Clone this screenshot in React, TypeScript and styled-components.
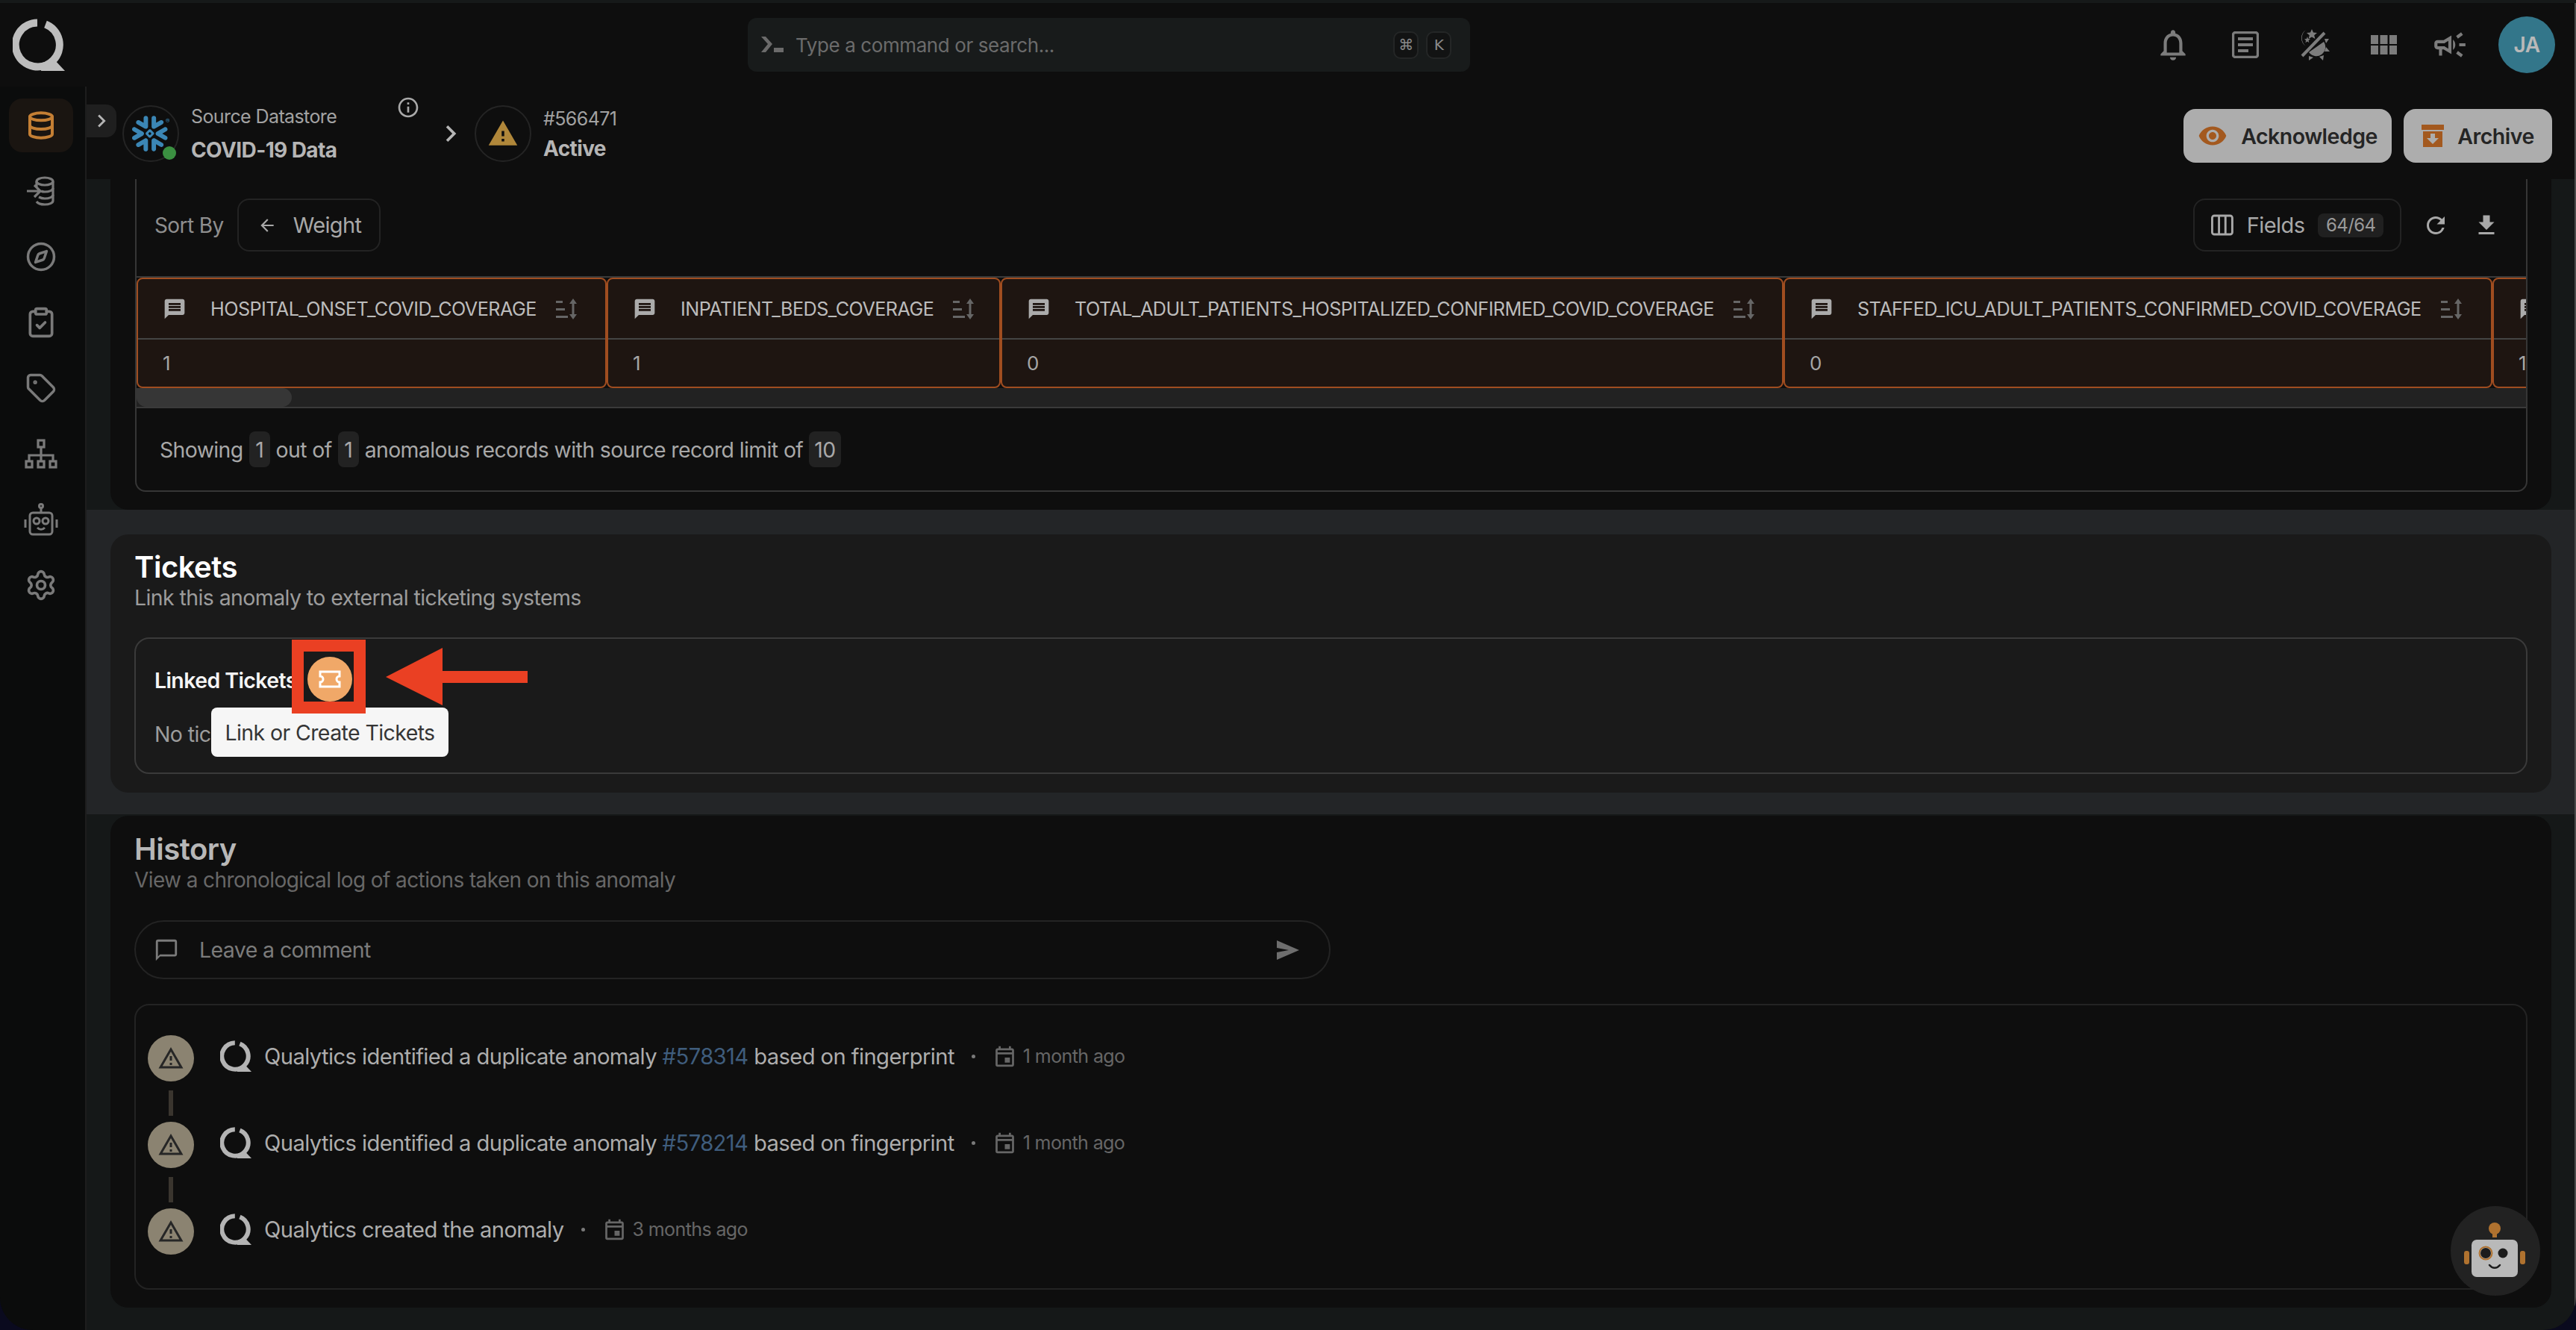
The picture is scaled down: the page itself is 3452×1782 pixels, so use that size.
import React from "react";
import styled, { createGlobalStyle } from "styled-components";
import {
  MdOutlineNotifications,
  MdOutlineCampaign,
  MdRemoveRedEye,
  MdRefresh,
  MdFileDownload,
  MdOutlineChatBubbleOutline,
  MdMessage,
  MdOutlineEvent,
  MdWarning,
  MdOutlineWarningAmber,
  MdChevronRight,
  MdArrowBack,
  MdInfoOutline,
} from "react-icons/md";
import { Compass, ClipboardCheck, Tag, Settings, Database } from "lucide-react";
import { SiSnowflake } from "react-icons/si";

const GlobalStyle = createGlobalStyle`
  html, body {
    margin: 0;
    padding: 0;
    background: #0a0a1e;
  }
  * {
    box-sizing: border-box;
  }
`;

const Frame = styled.div`
  width: 3452px;
  height: 1782px;
  position: relative;
  display: flex;
  flex-direction: column;
  overflow: hidden;
  background: #0e0e0e;
  border-top: 4px solid #161919;
  border-bottom-right-radius: 44px;
  border-bottom-left-radius: 44px;
  font-family: Inter, "Liberation Sans", sans-serif;
  letter-spacing: -0.6px;
`;

const Header = styled.header`
  height: 112px;
  flex: none;
  display: flex;
  align-items: center;
  padding-left: 17px;
  padding-right: 28px;
`;

const LogoSlot = styled.span`
  display: flex;
  color: #bdbdbd;
`;

const CommandBar = styled.div`
  width: 968px;
  height: 72px;
  margin-left: 915px;
  align-self: flex-start;
  margin-top: 20px;
  display: flex;
  align-items: center;
  padding: 0 25px 0 18px;
  background: #181b1b;
  border-radius: 12px;
`;

const CommandText = styled.span`
  flex: 1;
  margin-left: 16px;
  font-size: 26px;
  color: #6b6b6b;
  letter-spacing: -0.4px;
`;

const Key = styled.span`
  width: 34px;
  height: 37px;
  margin-left: 10px;
  display: flex;
  align-items: center;
  justify-content: center;
  border: 2px solid #242626;
  border-radius: 10px;
  background: #121313;
  font-size: 20px;
  color: #8a8a8a;
  font-family: "DejaVu Sans", sans-serif;
`;

const TopIcons = styled.div`
  margin-left: auto;
  display: flex;
  align-items: center;
`;

const TopIcon = styled.span<{ $gap: number }>`
  display: flex;
  margin-left: ${(p) => p.$gap}px;
  color: #7c7c7c;
`;

const Avatar = styled.div`
  width: 76px;
  height: 76px;
  margin-left: 40px;
  border-radius: 50%;
  background: #33768a;
  color: #b9b9b9;
  display: flex;
  align-items: center;
  justify-content: center;
  font-size: 28px;
  font-weight: 600;
`;

const Body = styled.div`
  flex: 1;
  min-height: 0;
  display: flex;
`;

const Sidebar = styled.nav`
  width: 116px;
  flex: none;
  display: flex;
  flex-direction: column;
  gap: 16px;
  padding: 16px 0 0 12px;
  border-right: 2px solid #1d1d1d;
  background: #0b0c0c;
`;

const SideItem = styled.div<{ $active?: boolean }>`
  width: 86px;
  height: 72px;
  display: flex;
  align-items: center;
  justify-content: center;
  border-radius: 18px;
  color: ${(p) => (p.$active ? "#c47f34" : "#7a7a7a")};
  background: ${(p) => (p.$active ? "#1a1511" : "transparent")};
`;

const Main = styled.main`
  flex: 1;
  min-width: 0;
  display: flex;
  flex-direction: column;
  position: relative;
`;

const ExpandTab = styled.div`
  position: absolute;
  left: 0;
  top: 24px;
  width: 40px;
  height: 44px;
  display: flex;
  align-items: center;
  justify-content: center;
  background: #1f1f1f;
  border-radius: 0 14px 14px 0;
  color: #b5b5b5;
`;

const SubHeader = styled.div`
  height: 124px;
  flex: none;
  display: flex;
  align-items: center;
  padding: 2px 32px 0 48px;
  background: #0e0e0e;
`;

const CircleBadge = styled.div`
  width: 76px;
  height: 76px;
  flex: none;
  position: relative;
  display: flex;
  align-items: center;
  justify-content: center;
  border: 2px solid #242424;
  border-radius: 50%;
`;

const OnlineDot = styled.span`
  position: absolute;
  right: 2px;
  bottom: 1px;
  width: 18px;
  height: 18px;
  border-radius: 50%;
  background: #3b9041;
`;

const Crumb = styled.div<{ $width?: number; $gap: number }>`
  margin-left: 16px;
  margin-top: ${(p) => (p.$width ? 0 : 2)}px;
  width: ${(p) => (p.$width ? `${p.$width}px` : "auto")};
  display: flex;
  flex-direction: column;
  gap: ${(p) => p.$gap}px;
`;

const CrumbLabel = styled.span`
  font-size: 25px;
  line-height: 32px;
  color: #a2a2a2;
`;

const CrumbValue = styled.span`
  font-size: 28px;
  line-height: 36px;
  font-weight: 700;
  color: #b5b5b5;
`;

const InfoMark = styled.span`
  display: flex;
  align-self: flex-start;
  margin: 10px 0 0 -4px;
  color: #a9a9a9;
`;

const CrumbChevron = styled.span`
  display: flex;
  margin: 0 10px 0 19px;
  color: #b5b5b5;
`;

const Actions = styled.div`
  margin-left: auto;
  display: flex;
  gap: 16px;
  margin-top: 6px;
`;

const ActionButton = styled.button<{ $width: number }>`
  width: ${(p) => p.$width}px;
  height: 72px;
  display: flex;
  align-items: center;
  justify-content: center;
  gap: 18px;
  border: 0;
  border-radius: 16px;
  background: #adadad;
  color: #252525;
  font-family: inherit;
  font-size: 28.5px;
  font-weight: 600;
  letter-spacing: -0.5px;
  svg {
    flex: none;
    color: #a3591f;
  }
`;

const Strip = styled.section<{ $tone: "plain" | "lit"; $pad: string; $height: number }>`
  height: ${(p) => p.$height}px;
  flex: none;
  padding: ${(p) => p.$pad};
  background: ${(p) => (p.$tone === "lit" ? "#232527" : "#151818")};
`;

const Card = styled.div<{ $lit?: boolean; $cut?: boolean }>`
  height: 100%;
  padding: ${(p) => (p.$cut ? "0 32px 24px 33px" : "0 32px 0 32px")};
  background: ${(p) => (p.$lit ? "#1a1a1a" : "#0e0e0e")};
  border-radius: ${(p) => (p.$cut ? "0 0 24px 24px" : "24px")};
`;

const RecordsBox = styled.div`
  height: 419px;
  display: flex;
  flex-direction: column;
  border: 2px solid #363636;
  border-top: 0;
  border-radius: 0 0 14px 14px;
  overflow: hidden;
`;

const SortRow = styled.div`
  height: 130px;
  flex: none;
  display: flex;
  align-items: flex-start;
  padding: 26px 24px 0 24px;
`;

const SortLabel = styled.span`
  margin: 19px 18px 0 0;
  font-size: 28px;
  color: #8e8e8e;
`;

const OutlineButton = styled.div<{ $width: number; $inset: number; $gap: number }>`
  width: ${(p) => p.$width}px;
  height: 71px;
  display: flex;
  align-items: center;
  gap: ${(p) => p.$gap}px;
  padding: 0 22px 0 ${(p) => p.$inset}px;
  border: 2px solid #232323;
  border-radius: 16px;
  font-size: 29px;
  color: #a8a8a8;
`;

const FieldsCount = styled.span`
  margin-left: auto;
  height: 32px;
  width: 91px;
  display: flex;
  align-items: center;
  justify-content: center;
  border-radius: 8px;
  background: #202020;
  color: #9a9a9a;
  font-size: 24px;
`;

const GhostIcon = styled.span<{ $gap: number }>`
  display: flex;
  align-self: center;
  margin-left: ${(p) => p.$gap}px;
  color: #a8a8a8;
`;

const RightTools = styled.div`
  margin-left: auto;
  padding-right: 11px;
  display: flex;
  align-items: flex-start;
`;

const RecordTable = styled.div`
  height: 150px;
  flex: none;
  display: flex;
  border-top: 2px solid #3a3a3a;
  overflow: hidden;
`;

const Column = styled.div<{ $width: number }>`
  width: ${(p) => p.$width}px;
  flex: none;
  display: flex;
  flex-direction: column;
  background: #1e1511;
  border: 2px solid #a04d20;
  border-radius: 8px;
`;

const ColumnHead = styled.div`
  height: 81px;
  flex: none;
  display: flex;
  align-items: center;
  padding-left: 33px;
  border-bottom: 2px solid #444;
  font-size: 25.2px;
  color: #bcbcbc;
  white-space: nowrap;
  letter-spacing: -0.55px;
`;

const ColumnName = styled.span`
  margin-left: 32px;
`;

const SortGlyph = styled.svg`
  flex: none;
  margin-left: 26px;
`;

const ColumnValue = styled.div`
  flex: 1;
  display: flex;
  align-items: center;
  padding-left: 33px;
  font-size: 26px;
  color: #a6a6a6;
`;

const ScrollTrack = styled.div`
  height: 27px;
  flex: none;
  border-bottom: 2px solid #3a3a3a;
  background: #222222;
`;

const ScrollThumb = styled.div`
  width: 208px;
  height: 100%;
  border-radius: 0 14px 14px 14px;
  background: #363636;
`;

const ShowingRow = styled.div`
  flex: 1;
  display: flex;
  align-items: center;
  gap: 8px;
  padding-left: 31px;
  font-size: 28.4px;
  color: #a8a8a8;
`;

const Pill = styled.span`
  min-width: 28px;
  height: 48px;
  padding: 0 7px;
  display: flex;
  align-items: center;
  justify-content: center;
  border-radius: 8px;
  background: #222222;
`;

const Heading = styled.h2<{ $lit?: boolean }>`
  margin: 0;
  font-size: 40px;
  line-height: 46px;
  font-weight: 600;
  letter-spacing: -0.5px;
  color: ${(p) => (p.$lit ? "#ffffff" : "#b7b7b7")};
`;

const SubHeading = styled.p<{ $lit?: boolean }>`
  margin: 0;
  font-size: ${(p) => (p.$lit ? 28.5 : 28)}px;
  line-height: 36px;
  color: ${(p) => (p.$lit ? "#9c9c9c" : "#676767")};
`;

const TicketsTitle = styled.div`
  padding-top: 21px;
  height: 138px;
`;

const LinkedBox = styled.div`
  height: 183px;
  position: relative;
  padding: 35px 25px;
  border: 2px solid #3a3a3a;
  border-radius: 20px;
`;

const LinkedRow = styled.div`
  height: 40px;
  display: flex;
  align-items: center;
  font-size: 28.5px;
  font-weight: 600;
  color: #f5f5f5;
`;

const TicketButton = styled.span`
  position: absolute;
  left: 230px;
  top: 24px;
  width: 60px;
  height: 60px;
  display: flex;
  align-items: center;
  justify-content: center;
  border-radius: 50%;
  background: #f0a868;
`;

const HighlightBox = styled.span`
  position: absolute;
  left: 209px;
  top: 1px;
  width: 99px;
  height: 99px;
  border: 16px solid #ea4023;
  z-index: 2;
`;

const ArrowMark = styled.svg`
  position: absolute;
  left: 335px;
  top: 12px;
`;

const Tooltip = styled.div`
  position: absolute;
  left: 101px;
  top: 92px;
  width: 318px;
  height: 66px;
  display: flex;
  align-items: center;
  justify-content: center;
  border-radius: 8px;
  background: #f6f6f6;
  font-size: 28.5px;
  color: #353535;
`;

const EmptyNote = styled.div`
  margin-top: 35px;
  font-size: 28.5px;
  line-height: 36px;
  color: #9c9c9c;
`;

const HistoryTitle = styled.div`
  padding-top: 22px;
  height: 140px;
`;

const CommentBox = styled.div`
  width: 1603px;
  height: 79px;
  display: flex;
  align-items: center;
  padding: 0 40px 0 24px;
  border: 2px solid #232323;
  border-radius: 40px;
  color: #7b7b7b;
`;

const CommentText = styled.span`
  flex: 1;
  margin-left: 27px;
  font-size: 28.5px;
`;

const LogBox = styled.div`
  height: 383px;
  margin-top: 33px;
  display: flex;
  flex-direction: column;
  padding: 37px 0 0 16px;
  border: 2px solid #232323;
  border-radius: 20px;
`;

const LogRow = styled.div`
  height: 62px;
  display: flex;
  align-items: center;
  font-size: 29.2px;
  color: #adadad;
  white-space: nowrap;
`;

const LogBadge = styled.span`
  width: 62px;
  height: 62px;
  flex: none;
  margin-top: 6px;
  display: flex;
  align-items: center;
  justify-content: center;
  border-radius: 50%;
  background: #8b8371;
  color: #262626;
`;

const LogMark = styled.span`
  display: flex;
  margin: 0 17px 0 35px;
  color: #b4b4b4;
`;

const IssueLink = styled.span`
  color: #3f5d7d;
`;

const Dot = styled.span`
  width: 5px;
  height: 5px;
  margin: 0 23px;
  border-radius: 50%;
  background: #7a7a7a;
`;

const When = styled.span`
  display: flex;
  align-items: center;
  gap: 8px;
  color: #666666;
  font-size: 25px;
`;

const Connector = styled.div`
  width: 6px;
  height: 34px;
  margin: 15px 0 5px 28px;
  background: #3a352e;
  flex: none;
`;

const BotButton = styled.div`
  position: absolute;
  left: 3284px;
  top: 1612px;
  width: 120px;
  height: 120px;
  border-radius: 50%;
  background: #222222;
  display: flex;
  align-items: center;
  justify-content: center;
`;

const WindowEdge = styled.div`
  position: absolute;
  right: 0;
  top: 0;
  bottom: 0;
  width: 2px;
  background: #4a4a4a;
`;

function QLogo({ size }: { size: number }) {
  return (
    <svg width={size} height={size} viewBox="0 0 70 70" fill="none">
      <path d="M33 5.500A29.500 29.500 0 1 0 44 7.500" stroke="currentColor" strokeWidth="10" />
      <path d="M40 59 55 54 70 70H38Z" fill="currentColor" />
    </svg>
  );
}

function SourceIntoDb() {
  return (
    <svg width="40" height="40" viewBox="0 0 40 40" fill="none" stroke="currentColor" strokeWidth="3.200">
      <ellipse cx="25" cy="7" rx="11" ry="5" />
      <path d="M14 7v7M36 7v26c0 3-5 5-11 5-5 0-9-1-11-4" />
      <path d="M36 16c0 3-5 5-11 5-2 0-3 0-5-1M36 25c0 3-5 5-11 5-3 0-6-1-8-2" />
      <path d="M1 20h17M11 12l8 8-8 8" />
    </svg>
  );
}

function Hierarchy() {
  return (
    <svg width="44" height="40" viewBox="0 0 44 40" fill="none" stroke="currentColor" strokeWidth="3.200">
      <rect x="18" y="2" width="8" height="9" />
      <path d="M22 11v11M6 30v-8h32v8M22 22v8" />
      <rect x="2" y="30" width="8" height="8" />
      <rect x="18" y="30" width="8" height="8" />
      <rect x="34" y="30" width="8" height="8" />
    </svg>
  );
}

function RobotOutline() {
  return (
    <svg width="46" height="44" viewBox="0 0 46 44" fill="none" stroke="currentColor" strokeWidth="3">
      <circle cx="23" cy="4" r="2.500" />
      <path d="M23 7v6" />
      <rect x="8" y="13" width="30" height="29" rx="4" />
      <circle cx="17" cy="24" r="4" />
      <circle cx="29" cy="24" r="4" />
      <path d="M18 33c3 3 7 3 10 0" />
      <path d="M2 22v11M44 22v11" />
    </svg>
  );
}

function ThemeSwitch() {
  return (
    <svg width="44" height="42" viewBox="0 0 44 42" fill="#7c7c7c">
      <path d="M11 1A14 14 0 0 0 11 23 13 13 0 0 1 11 1Z" />
      <path d="M19 0l2 4.600 5 .4-3.800 3.200 1.200 4.800L19 10.400 14.600 13l1.200-4.800L12 5l5-.4Z" />
      <path d="M13 10l1 3 3 .2-2.400 2 .8 3-2.400-1.600-2.600 1.600.8-3L9 13.200l3-.2Z" />
      <path d="M6 36 36 5" stroke="#7c7c7c" strokeWidth="4" />
      <path d="M35 17a12 12 0 0 1-20 14Z" />
      <path d="M36 13h6l-4 6ZM38 24l5 6h-7ZM29 37l6-2-1 7ZM15 36l6 2-6 4Z" />
    </svg>
  );
}

function GridBlocks() {
  const columnsX = [0, 12.500, 25];
  const rowsY = [0, 14];
  return (
    <svg width="35" height="26" viewBox="0 0 35 26" fill="#7c7c7c">
      {columnsX.map((x) =>
        rowsY.map((y) => <rect key={`${x}-${y}`} x={x} y={y} width="10" height="12" />),
      )}
    </svg>
  );
}

function DocLines() {
  return (
    <svg width="36" height="36" viewBox="0 0 36 36" fill="none" stroke="#7c7c7c">
      <rect x="1.500" y="1.500" width="33" height="33" rx="3" strokeWidth="3.400" />
      <path d="M8 10h20M8 18h20M8 26h14" strokeWidth="4" />
    </svg>
  );
}

function Terminal() {
  return (
    <svg width="30" height="22" viewBox="0 0 30 22" fill="#6b6b6b">
      <path d="M0 0h6l9 10-9 11H0l9-11Z" />
      <rect x="17" y="15" width="13" height="6" />
    </svg>
  );
}

function ArchiveBox() {
  return (
    <svg width="30" height="30" viewBox="0 0 30 30">
      <rect width="30" height="7" fill="currentColor" />
      <rect x="2" y="9" width="26" height="21" fill="currentColor" />
      <path d="M12 12h6v6h5l-8 8-8-8h5Z" fill="#adadad" />
    </svg>
  );
}

function ColumnsGlyph() {
  return (
    <svg width="31" height="29" viewBox="0 0 31 29" fill="none" stroke="#a8a8a8" strokeWidth="3">
      <rect x="1.500" y="1.500" width="28" height="26" rx="3" />
      <path d="M11 2v25M20 2v25" />
    </svg>
  );
}

function TicketGlyph() {
  return (
    <svg width="30" height="24" viewBox="0 0 30 24" fill="none" stroke="#fff" strokeWidth="3">
      <path d="M2 2h26v6a4 4 0 0 0 0 8v6H2v-6a4 4 0 0 0 0-8Z" />
    </svg>
  );
}

function SortToggle() {
  return (
    <SortGlyph width="30" height="28" viewBox="0 0 30 28" fill="#666">
      <rect x="0" y="3" width="9" height="3" />
      <rect x="0" y="13" width="12" height="3" />
      <rect x="0" y="23" width="16" height="3" />
      <path d="M23 0l5 7h-3.500v14H28l-5 7-5-7h3.500V7H18Z" />
    </SortGlyph>
  );
}

function SendGlyph() {
  return (
    <svg width="32" height="26" viewBox="0 0 32 26" fill="#6e6e6e">
      <path d="M2 0 32 13 2 26v-10l16-3-16-3Z" />
    </svg>
  );
}

function BotFace() {
  return (
    <svg width="84" height="76" viewBox="0 0 84 76">
      <circle cx="41" cy="8" r="8" fill="#b0722f" />
      <rect x="38" y="12" width="6" height="8" fill="#b0722f" />
      <rect x="10" y="23" width="62" height="50" rx="7" fill="#b9b9b9" />
      <rect x="0" y="38" width="7" height="18" rx="3" fill="#b0722f" />
      <rect x="75" y="38" width="7" height="18" rx="3" fill="#b0722f" />
      <circle cx="29" cy="41" r="7" fill="#1c1c1c" />
      <circle cx="29" cy="41" r="8.500" fill="none" stroke="#b0722f" strokeWidth="2" />
      <circle cx="52" cy="41" r="6.500" fill="#1c1c1c" />
      <path d="M34 57c4 5 10 5 14 0" fill="none" stroke="#1c1c1c" strokeWidth="2.500" strokeLinecap="round" />
    </svg>
  );
}

const columns = [
  { name: "HOSPITAL_ONSET_COVID_COVERAGE", value: "1", width: 630 },
  { name: "INPATIENT_BEDS_COVERAGE", value: "1", width: 528 },
  { name: "TOTAL_ADULT_PATIENTS_HOSPITALIZED_CONFIRMED_COVID_COVERAGE", value: "0", width: 1049 },
  { name: "STAFFED_ICU_ADULT_PATIENTS_CONFIRMED_COVID_COVERAGE", value: "0", width: 950 },
  { name: "", value: "1", width: 300 },
];

const history = [
  { id: "578314", when: "1 month ago" },
  { id: "578214", when: "1 month ago" },
];

export default function App() {
  return (
    <>
      <GlobalStyle />
      <Frame>
        <Header>
          <LogoSlot>
            <QLogo size={70} />
          </LogoSlot>
          <CommandBar>
            <Terminal />
            <CommandText>Type a command or search...</CommandText>
            <Key>⌘</Key>
            <Key>K</Key>
          </CommandBar>
          <TopIcons>
            <TopIcon $gap={0}>
              <MdOutlineNotifications size={50} />
            </TopIcon>
            <TopIcon $gap={54}>
              <DocLines />
            </TopIcon>
            <TopIcon $gap={52}>
              <ThemeSwitch />
            </TopIcon>
            <TopIcon $gap={54}>
              <GridBlocks />
            </TopIcon>
            <TopIcon $gap={46}>
              <MdOutlineCampaign size={50} />
            </TopIcon>
            <Avatar>JA</Avatar>
          </TopIcons>
        </Header>
        <Body>
          <Sidebar>
            <SideItem $active>
              <Database size={40} strokeWidth={2.400} />
            </SideItem>
            <SideItem>
              <SourceIntoDb />
            </SideItem>
            <SideItem>
              <Compass size={42} strokeWidth={2} />
            </SideItem>
            <SideItem>
              <ClipboardCheck size={44} strokeWidth={2} />
            </SideItem>
            <SideItem>
              <Tag size={42} strokeWidth={2} />
            </SideItem>
            <SideItem>
              <Hierarchy />
            </SideItem>
            <SideItem>
              <RobotOutline />
            </SideItem>
            <SideItem>
              <Settings size={44} strokeWidth={2} />
            </SideItem>
          </Sidebar>
          <Main>
            <SubHeader>
              <CircleBadge>
                <SiSnowflake size={50} color="#3b86b5" />
                <OnlineDot />
              </CircleBadge>
              <Crumb $width={279} $gap={11}>
                <CrumbLabel>Source Datastore</CrumbLabel>
                <CrumbValue>COVID-19 Data</CrumbValue>
              </Crumb>
              <InfoMark>
                <MdInfoOutline size={32} />
              </InfoMark>
              <CrumbChevron>
                <MdChevronRight size={44} />
              </CrumbChevron>
              <CircleBadge>
                <MdWarning size={42} color="#b0873a" />
              </CircleBadge>
              <Crumb $gap={6}>
                <CrumbLabel>#566471</CrumbLabel>
                <CrumbValue>Active</CrumbValue>
              </Crumb>
              <Actions>
                <ActionButton $width={279}>
                  <MdRemoveRedEye size={40} />
                  Acknowledge
                </ActionButton>
                <ActionButton $width={199}>
                  <ArchiveBox />
                  Archive
                </ActionButton>
              </Actions>
            </SubHeader>
            <ExpandTab>
              <MdChevronRight size={34} />
            </ExpandTab>

            <Strip $tone="plain" $pad="0 33px 0 32px" $height={443}>
              <Card $cut>
                <RecordsBox>
                  <SortRow>
                    <SortLabel>Sort By</SortLabel>
                    <OutlineButton $width={192} $inset={25} $gap={22}>
                      <MdArrowBack size={26} />
                      Weight
                    </OutlineButton>
                    <RightTools>
                      <OutlineButton $width={279} $inset={22} $gap={18}>
                        <ColumnsGlyph />
                        Fields
                        <FieldsCount>64/64</FieldsCount>
                      </OutlineButton>
                      <GhostIcon $gap={28}>
                        <MdRefresh size={36} />
                      </GhostIcon>
                      <GhostIcon $gap={32}>
                        <MdFileDownload size={36} />
                      </GhostIcon>
                    </RightTools>
                  </SortRow>
                  <RecordTable>
                    {columns.map((col, i) => (
                      <Column key={i} $width={col.width}>
                        <ColumnHead>
                          <MdMessage size={32} color="#ababab" />
                          {col.name && <ColumnName>{col.name}</ColumnName>}
                          {col.name && <SortToggle />}
                        </ColumnHead>
                        <ColumnValue>{col.value}</ColumnValue>
                      </Column>
                    ))}
                  </RecordTable>
                  <ScrollTrack>
                    <ScrollThumb />
                  </ScrollTrack>
                  <ShowingRow>
                    Showing <Pill>1</Pill> out of <Pill>1</Pill> anomalous records with source record limit of <Pill>10</Pill>
                  </ShowingRow>
                </RecordsBox>
              </Card>
            </Strip>

            <Strip $tone="lit" $pad="33px 33px 29px 32px" $height={408}>
              <Card $lit>
                <TicketsTitle>
                  <Heading $lit>Tickets</Heading>
                  <SubHeading $lit>Link this anomaly to external ticketing systems</SubHeading>
                </TicketsTitle>
                <LinkedBox>
                  <LinkedRow>Linked Tickets</LinkedRow>
                  <EmptyNote>No tickets linked</EmptyNote>
                  <TicketButton>
                    <TicketGlyph />
                  </TicketButton>
                  <Tooltip>Link or Create Tickets</Tooltip>
                  <HighlightBox />
                  <ArrowMark width="190" height="77" viewBox="0 0 190 77" fill="#ea4023">
                    <path d="M0 39 76 0V31H190V47H76V77Z" />
                  </ArrowMark>
                </LinkedBox>
              </Card>
            </Strip>

            <Strip $tone="plain" $pad="2px 33px 30px 32px" $height={691}>
              <Card>
                <HistoryTitle>
                  <Heading>History</Heading>
                  <SubHeading>View a chronological log of actions taken on this anomaly</SubHeading>
                </HistoryTitle>
                <CommentBox>
                  <MdOutlineChatBubbleOutline size={34} />
                  <CommentText>Leave a comment</CommentText>
                  <SendGlyph />
                </CommentBox>
                <LogBox>
                  {history.map((row) => (
                    <React.Fragment key={row.id}>
                      <LogRow>
                        <LogBadge>
                          <MdOutlineWarningAmber size={36} />
                        </LogBadge>
                        <LogMark>
                          <QLogo size={42} />
                        </LogMark>
                        Qualytics identified a duplicate anomaly&nbsp;
                        <IssueLink>#{row.id}</IssueLink>
                        &nbsp;based on fingerprint
                        <Dot />
                        <When>
                          <MdOutlineEvent size={33} />
                          {row.when}
                        </When>
                      </LogRow>
                      <Connector />
                    </React.Fragment>
                  ))}
                  <LogRow>
                    <LogBadge>
                      <MdOutlineWarningAmber size={36} />
                    </LogBadge>
                    <LogMark>
                      <QLogo size={42} />
                    </LogMark>
                    Qualytics created the anomaly
                    <Dot />
                    <When>
                      <MdOutlineEvent size={33} />3 months ago
                    </When>
                  </LogRow>
                </LogBox>
              </Card>
            </Strip>
          </Main>
        </Body>
        <BotButton>
          <BotFace />
        </BotButton>
        <WindowEdge />
      </Frame>
    </>
  );
}
